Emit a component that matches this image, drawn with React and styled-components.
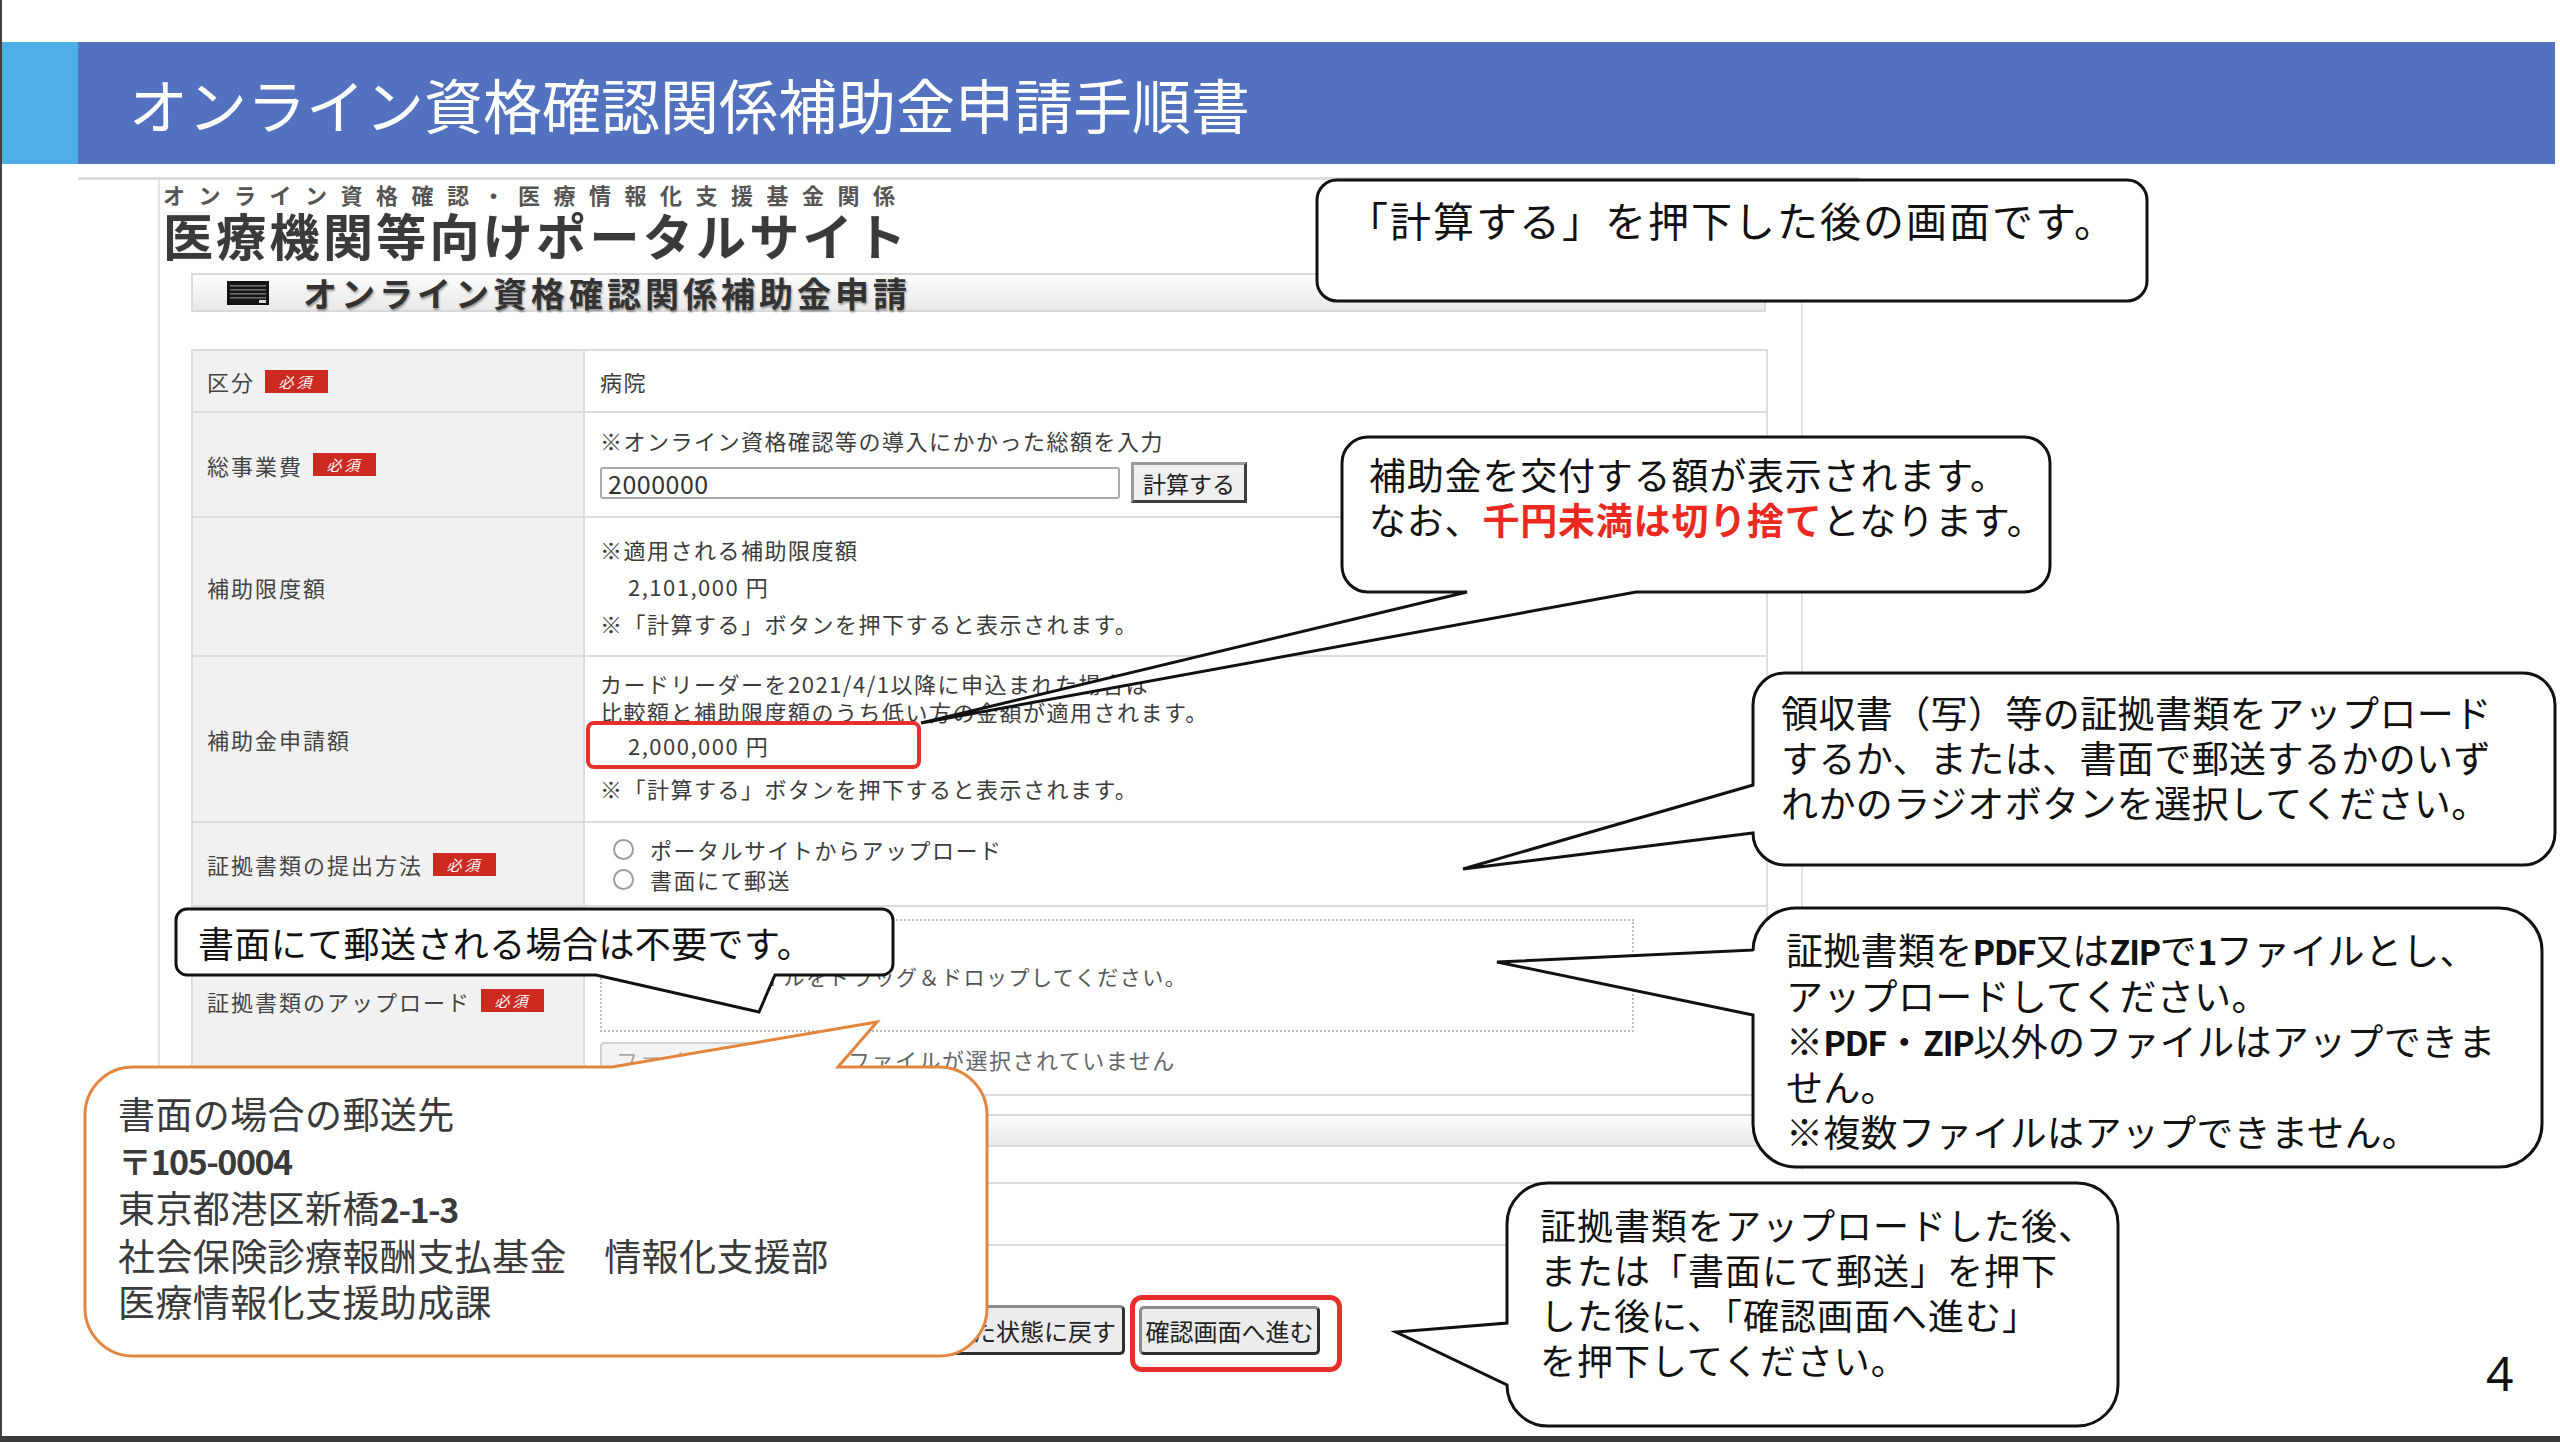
import React from 'react';
import styled, { createGlobalStyle } from 'styled-components';

const GlobalStyle = createGlobalStyle`
  html, body { margin: 0; padding: 0; background: #fff; }
  body { font-family: "Noto Sans CJK JP", "Noto Sans", sans-serif; color: #222; }
  * { box-sizing: border-box; }
`;

// 吹き出しの輪郭（角丸＋しっぽ）
function bubblePath(w, h, r, tail) {
    let d = `M ${r} 0`;
    if (tail && tail.side === 'top') d += ` H ${tail.a} L ${tail.tx} ${tail.ty} L ${tail.b} 0`;
    d += ` H ${w - r} A ${r} ${r} 0 0 1 ${w} ${r} V ${h - r} A ${r} ${r} 0 0 1 ${w - r} ${h}`;
    if (tail && tail.side === 'bottom') d += ` H ${tail.b} L ${tail.tx} ${tail.ty} L ${tail.a} ${h}`;
    d += ` H ${r} A ${r} ${r} 0 0 1 0 ${h - r}`;
    if (tail && tail.side === 'left') d += ` V ${tail.b} L ${tail.tx} ${tail.ty} L 0 ${tail.a}`;
    d += ` V ${r} A ${r} ${r} 0 0 1 ${r} 0 Z`;
    return d;
}

function Callout({ x, y, w, h, tail, stroke = '#111', pl, pt, fs = 37, lh = 45, ls = 0.8, color = '#111', children }) {
    const r = Math.round(Math.min(w, h) / 6);
    return (
        <CalloutBox $x={x} $y={y} $w={w} $h={h}>
            <BubbleSvg width={w} height={h}>
                <path d={bubblePath(w, h, r, tail)} fill="#fff" stroke={stroke} strokeWidth="3" strokeLinejoin="miter" />
            </BubbleSvg>
            <CalloutText $pl={pl} $pt={pt} $fs={fs} $lh={lh} $ls={ls} $color={color}>
                {children}
            </CalloutText>
        </CalloutBox>
    );
}

function ListIcon() {
    return (
        <svg width="42" height="24" viewBox="0 0 42 24">
            <rect width="42" height="24" fill="#141414" />
            {[4, 8, 12, 16].map((v) => (
                <rect key={v} x="3" y={v} width="36" height="1.6" fill="#6d6d6d" />
            ))}
            <rect x="32" y="19" width="7" height="3" fill="#d8d8d8" />
        </svg>
    );
}

export default function App() {
    return (
        <Slide>
            <GlobalStyle />
            <Header>
                <HeaderAccent />
                <HeaderTitle>オンライン資格確認関係補助金申請手順書</HeaderTitle>
            </Header>

            <Portal>
                <PageFrame>
                    <SiteCaption>オンライン資格確認・医療情報化支援基金関係</SiteCaption>
                    <SiteTitle>医療機関等向けポータルサイト</SiteTitle>
                    <Content>
                        <SectionBar $h={39} $mt={14}>
                            <ListIcon />
                            <SectionTitle>オンライン資格確認関係補助金申請</SectionTitle>
                        </SectionBar>

                        <Table>
                            <Row $h={62}>
                                <Label>区分<Badge>必須</Badge></Label>
                                <Value>
                                    <Line>病院</Line>
                                </Value>
                            </Row>
                            <Row $h={105}>
                                <Label>総事業費<Badge>必須</Badge></Label>
                                <Value $gap={8}>
                                    <Line>※オンライン資格確認等の導入にかかった総額を入力</Line>
                                    <Controls>
                                        <AmountInput readOnly value="2000000" />
                                        <CalcButton>計算する</CalcButton>
                                    </Controls>
                                </Value>
                            </Row>
                            <Row $h={139}>
                                <Label>補助限度額</Label>
                                <Value>
                                    <Line $lh={37}>※適用される補助限度額</Line>
                                    <Line $lh={37} $indent={28}>2,101,000 円</Line>
                                    <Line $lh={37}>※「計算する」ボタンを押下すると表示されます。</Line>
                                </Value>
                            </Row>
                            <Row $h={166}>
                                <Label>補助金申請額</Label>
                                <Value $top={12}>
                                    <Line>カードリーダーを2021/4/1以降に申込まれた場合は</Line>
                                    <Line>比較額と補助限度額のうち低い方の金額が適用されます。</Line>
                                    <AmountFrame>2,000,000 円</AmountFrame>
                                    <Line $mt={5}>※「計算する」ボタンを押下すると表示されます。</Line>
                                </Value>
                            </Row>
                            <Row $h={84}>
                                <Label>証拠書類の提出方法<Badge>必須</Badge></Label>
                                <Value>
                                    <RadioLine><Radio />ポータルサイトからアップロード</RadioLine>
                                    <RadioLine><Radio />書面にて郵送</RadioLine>
                                </Value>
                            </Row>
                            <Row $h={189}>
                                <Label>証拠書類のアップロード<Badge>必須</Badge></Label>
                                <Value $top={12}>
                                    <DropZone>ファイルをドラッグ＆ドロップしてください。</DropZone>
                                    <FileRow>
                                        <FileButton>ファイルを選択</FileButton>
                                        <FileNote>ファイルが選択されていません</FileNote>
                                    </FileRow>
                                </Value>
                            </Row>
                        </Table>

                        <SectionBar $h={33} $mt={18} />
                    </Content>
                </PageFrame>

                <LowerTable>
                    <Row $h={62}>
                        <Label />
                        <Value />
                    </Row>
                </LowerTable>

                <ButtonRow>
                    <ResetButton>入力した状態に戻す</ResetButton>
                    <RedFrame>
                        <FormButton>確認画面へ進む</FormButton>
                    </RedFrame>
                </ButtonRow>
            </Portal>

            <Callout x={1317} y={180} w={830} h={121} pl={30} pt={14} fs={41} lh={50} ls={2}>
                「計算する」を押下した後の画面です。
            </Callout>

            <Callout
                x={1342} y={437} w={708} h={155} pl={27} pt={15}
                tail={{ side: 'bottom', a: 125, b: 294, tx: -421, ty: 286 }}
            >
                補助金を交付する額が表示されます。<br />
                なお、<RedText>千円未満は切り捨て</RedText>となります。
            </Callout>

            <Callout
                x={1753} y={673} w={802} h={192} pl={28} pt={17} ls={0.4}
                tail={{ side: 'left', a: 112, b: 160, tx: -290, ty: 196 }}
            >
                領収書（写）等の証拠書類をアップロード<br />
                するか、または、書面で郵送するかのいず<br />
                れかのラジオボタンを選択してください。
            </Callout>

            <Callout
                x={1753} y={908} w={789} h={259} pl={33} pt={19} ls={0.3}
                tail={{ side: 'left', a: 42, b: 107, tx: -256, ty: 54 }}
            >
                証拠書類を<Latin>PDF</Latin>又は<Latin>ZIP</Latin>で<Latin>1</Latin>ファイルとし、<br />
                アップロードしてください。<br />
                ※<Latin>PDF</Latin>・<Latin>ZIP</Latin>以外のファイルはアップできま<br />
                せん。<br />
                ※複数ファイルはアップできません。
            </Callout>

            <Callout
                x={1507} y={1183} w={611} h={243} pl={33} pt={19} fs={36} ls={1}
                tail={{ side: 'left', a: 140, b: 202, tx: -111, ty: 149 }}
            >
                証拠書類をアップロードした後、<br />
                または「書面にて郵送」を押下<br />
                した後に、「確認画面へ進む」<br />
                を押下してください。
            </Callout>

            <Callout
                x={176} y={909} w={717} h={66} pl={22} pt={11} fs={36} lh={44} ls={0.4}
                tail={{ side: 'bottom', a: 420, b: 599, tx: 583, ty: 103 }}
            >
                書面にて郵送される場合は不要です。
            </Callout>

            <Callout
                x={85} y={1067} w={902} h={289} pl={33} pt={23} lh={46} ls={0.4}
                stroke="#e3853f" color="#3a3a3a"
                tail={{ side: 'top', a: 527, b: 753, tx: 792, ty: -45 }}
            >
                書面の場合の郵送先<br />
                <Latin>〒105-0004</Latin><br />
                東京都港区新橋<Latin>2-1-3</Latin><br />
                社会保険診療報酬支払基金　情報化支援部<br />
                医療情報化支援助成課
            </Callout>

            <PageNumber>4</PageNumber>
            <BottomBar />
        </Slide>
    );
}

const Slide = styled.div`
    position: relative;
    width: 2560px;
    height: 1442px;
    overflow: hidden;
    background: #fff;
    box-shadow: inset 2px 0 0 #404040;
    display: flex;
    flex-direction: column;
`;
const BottomBar = styled.div`
    margin-top: auto;
    height: 6px;
    background: #3a3a3a;
`;
const Header = styled.header`
    display: flex;
    flex: none;
    height: 122px;
    margin: 42px 5px 0 2px;
    background: #5272bf;
`;
const HeaderAccent = styled.div`
    width: 76px;
    flex: none;
    background: #4eaeea;
`;
const HeaderTitle = styled.h1`
    margin: 0;
    padding-left: 51px;
    display: flex;
    align-items: center;
    font-size: 59px;
    font-weight: 400;
    line-height: 1;
    color: #fff;
    white-space: nowrap;
`;
const Portal = styled.section`
    flex: none;
    margin: 13px 0 0 78px;
    width: 1781px;
    border-top: 3px solid #dcdcdc;
`;
const PageFrame = styled.div`
    margin-left: 80px;
    width: 1645px;
    border-left: 2px solid #e2e2e2;
    border-right: 2px solid #e2e2e2;
    padding: 3px 0 23px 3px;
`;
const SiteCaption = styled.div`
    font-size: 22px;
    line-height: 22px;
    letter-spacing: 13.5px;
    font-weight: 700;
    color: #555;
    white-space: nowrap;
`;
const SiteTitle = styled.div`
    margin-top: 4px;
    font-size: 50px;
    line-height: 50px;
    letter-spacing: 3.3px;
    font-weight: 700;
    color: #3a3a3a;
    text-shadow: 0 0 1px rgba(0, 0, 0, 0.35);
    white-space: nowrap;
`;
const Content = styled.div`
    margin-left: 28px;
    width: 1577px;
`;
const SectionBar = styled.div`
    display: flex;
    align-items: center;
    width: 1575px;
    height: ${(p) => p.$h}px;
    margin-top: ${(p) => p.$mt}px;
    padding-left: 34px;
    border: 2px solid #d9d9d9;
    background: linear-gradient(#fdfdfd, #e8e8e8);
`;
const SectionTitle = styled.span`
    margin-left: 34px;
    font-size: 34px;
    line-height: 34px;
    font-weight: 700;
    letter-spacing: 4px;
    color: #333;
    text-shadow: 1px 2px 2px rgba(0, 0, 0, 0.35);
    white-space: nowrap;
`;
const Table = styled.div`
    margin-top: 37px;
    width: 1577px;
    border: 2px solid #dcdcdc;
    border-bottom: none;
`;
const Row = styled.div`
    display: grid;
    grid-template-columns: 392px 1fr;
    height: ${(p) => p.$h}px;
    border-bottom: 2px solid #dcdcdc;
`;
const Label = styled.div`
    display: flex;
    align-items: center;
    padding-left: 14px;
    background: #f1f1f1;
    border-right: 2px solid #dcdcdc;
    font-size: 22px;
    letter-spacing: 2px;
    color: #444;
    white-space: nowrap;
`;
const Badge = styled.span`
    margin-left: 10px;
    width: 63px;
    height: 23px;
    display: inline-flex;
    align-items: center;
    justify-content: center;
    background: #cc2a20;
    color: #fff;
    font-size: 15px;
    letter-spacing: 3px;
    font-style: italic;
`;
const Value = styled.div`
    display: flex;
    flex-direction: column;
    justify-content: ${(p) => (p.$top ? 'flex-start' : 'center')};
    gap: ${(p) => p.$gap || 0}px;
    padding: ${(p) => p.$top || 0}px 0 0 15px;
    font-size: 22px;
    letter-spacing: 1.5px;
    color: #3c3c3c;
    white-space: nowrap;
`;
const Line = styled.div`
    line-height: ${(p) => p.$lh || 28}px;
    padding-left: ${(p) => p.$indent || 0}px;
    margin-top: ${(p) => p.$mt || 0}px;
`;
const Controls = styled.div`
    display: flex;
    align-items: center;
    height: 41px;
`;
const AmountInput = styled.input`
    width: 520px;
    height: 32px;
    padding: 0 6px;
    border: 2px solid #a9a9a9;
    border-radius: 3px;
    font-family: inherit;
    font-size: 25px;
    letter-spacing: 0.5px;
    color: #333;
    background: #fff;
    outline: none;
`;
const CalcButton = styled.div`
    margin-left: 11px;
    width: 116px;
    height: 41px;
    display: flex;
    align-items: center;
    justify-content: center;
    border: 3px solid;
    border-color: #9a9a9a #3e3e3e #3e3e3e #9a9a9a;
    background: #efefef;
    font-size: 23px;
    letter-spacing: 0;
    color: #222;
`;
const AmountFrame = styled.div`
    margin: -4px 0 0 -14px;
    width: 335px;
    height: 48px;
    display: flex;
    align-items: center;
    padding-left: 38px;
    border: 4px solid #e8302a;
    border-radius: 8px;
`;
const RadioLine = styled.div`
    display: flex;
    align-items: center;
    line-height: 30px;
`;
const Radio = styled.span`
    margin: 0 16px 0 13px;
    width: 21px;
    height: 21px;
    border-radius: 50%;
    border: 2px solid #9d9d9d;
    background: #fff;
`;
const DropZone = styled.div`
    width: 1034px;
    height: 113px;
    display: flex;
    align-items: center;
    padding-left: 114px;
    border: 2px dotted #bdbdbd;
    font-size: 21px;
    color: #555;
`;
const FileRow = styled.div`
    display: flex;
    align-items: center;
    margin-top: 10px;
`;
const FileButton = styled.div`
    width: 235px;
    height: 33px;
    display: flex;
    align-items: center;
    padding-left: 14px;
    border: 2px solid #d0d0d0;
    border-radius: 4px;
    background: #f3f3f3;
    color: #aaa;
`;
const FileNote = styled.span`
    margin-left: 13px;
    color: #666;
`;
const LowerTable = styled.div`
    margin: 12px 0 0 113px;
    width: 1577px;
    border-top: 2px solid #dcdcdc;
`;
const ButtonRow = styled.div`
    display: flex;
    align-items: flex-start;
    gap: 5px;
    margin: 49px 0 0 113px;
    padding-left: 664px;
`;
const FormButton = styled.div`
    height: ${(p) => p.$h || 49}px;
    width: ${(p) => p.$w || 181}px;
    display: flex;
    align-items: center;
    justify-content: ${(p) => (p.$right ? 'flex-end' : 'center')};
    padding-right: ${(p) => (p.$right ? 6 : 0)}px;
    border: 3px solid;
    border-color: #8a8a8a #2f2f2f #2f2f2f #8a8a8a;
    border-radius: 5px;
    background: #ececec;
    font-size: 24px;
    color: #222;
    white-space: nowrap;
`;
const ResetButton = styled(FormButton).attrs({ $w: 270, $h: 50, $right: true })`
    margin-top: 10px;
    overflow: hidden;
`;
const RedFrame = styled.div`
    padding: 6px 17px 12px 4px;
    border: 5px solid #e8302a;
    border-radius: 12px;
`;
const CalloutBox = styled.div`
    position: absolute;
    left: ${(p) => p.$x}px;
    top: ${(p) => p.$y}px;
    width: ${(p) => p.$w}px;
    height: ${(p) => p.$h}px;
`;
const BubbleSvg = styled.svg`
    position: absolute;
    left: 0;
    top: 0;
    overflow: visible;
`;
const CalloutText = styled.div`
    position: relative;
    padding: ${(p) => p.$pt}px 0 0 ${(p) => p.$pl}px;
    font-size: ${(p) => p.$fs}px;
    line-height: ${(p) => p.$lh}px;
    letter-spacing: ${(p) => p.$ls}px;
    color: ${(p) => p.$color};
    white-space: nowrap;
`;
const RedText = styled.span`
    color: #ea2a1f;
    font-weight: 700;
`;
const Latin = styled.span`
    font-weight: 700;
    font-size: 0.92em;
    letter-spacing: -1.5px;
`;
const PageNumber = styled.div`
    position: absolute;
    left: 2486px;
    top: 1349px;
    font-family: "Noto Sans", sans-serif;
    font-size: 48px;
    line-height: 1;
    color: #111;
`;
